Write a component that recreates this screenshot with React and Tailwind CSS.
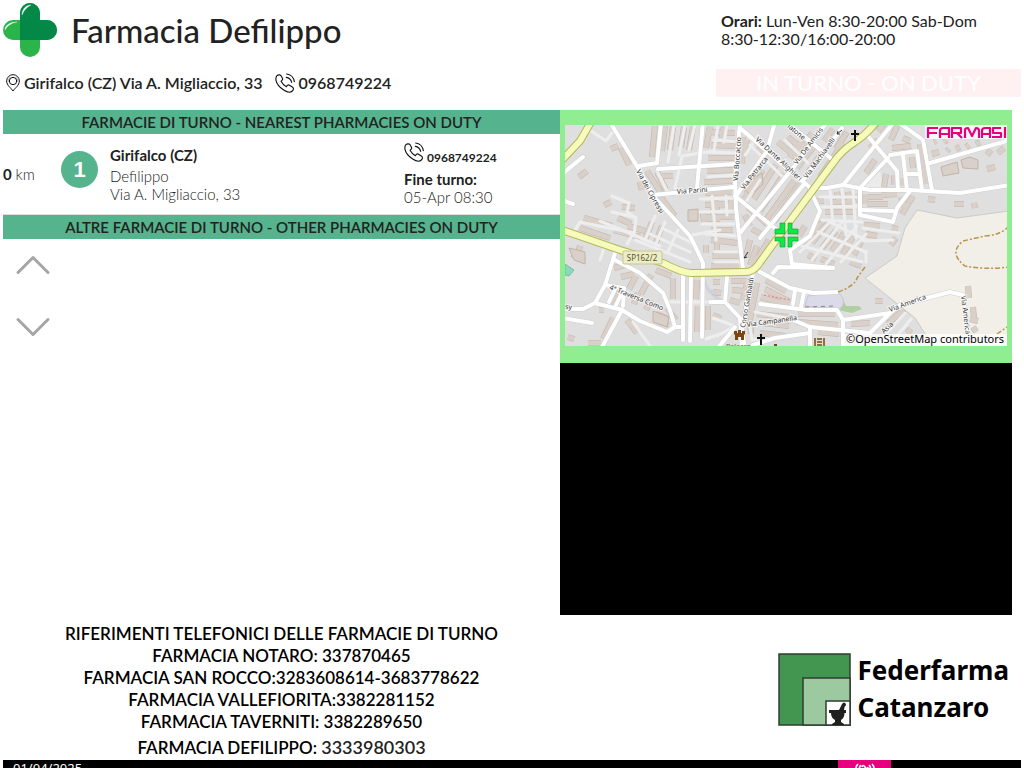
import React from "react";
import { ChevronUp, ChevronDown } from "lucide-react";

const minorRoads = [
  "M590 130L606 141L612 133", "M675 188L682 156L714 151", "M657 171L668 193", "M612 196L629 203L627 212L636 218L634 236",
  "M575 230L580 222L634 233", "M612 212L634 217", "M600 221L660 246", "M645 240L655 216", "M655 246L665 222", "M668 252L678 230",
  "M635 240L690 262", "M650 234L690 252", "M664 229L692 243", "M627 244L634 232", "M600 260L604 248", "M633 322L650 346",
  "M668 302L720 302", "M692 235L720 230", "M714 140L738 142", "M710 152L737 153", "M710 165L736 163", "M708 177L735 175",
  "M697 189L735 188", "M700 199L732 198", "M674 125L668 162", "M685 125L679 155", "M695 125L689 150", "M718 125L714 150",
  "M727 125L724 142", "M712 196L716 240", "M726 196L727 215", "M700 212L735 211", "M702 224L737 224", "M706 234L738 236",
  "M715 252L738 252", "M715 262L740 262", "M750 145L784 178", "M758 136L745 155", "M745 203L760 180", "M785 140L808 163",
  "M820 197L860 197", "M822 207L860 206", "M822 220L862 222", "M830 190L833 224", "M842 188L846 235", "M853 189L856 238",
  "M800 252L830 222L866 240", "M812 260L842 222", "M826 264L857 226", "M841 262L866 234", "M802 246L862 262", "M818 232L866 252",
  "M863 228L899 233", "M863 241L893 240", "M866 251L866 262", "M884 336L905 313", "M892 342L911 319", "M755 312L791 319",
  "M750 327L752 340L790 336", "M713 318L735 326L717 336", "M706 339L720 334",
];
const roads = [
  "M610 122L638 168L655 198L690 236L697 250L703 263L702 337", "M562 174L583 157", "M562 200L573 204",
  "M639 166L657 163L661 122", "M658 169L735 164", "M653 195L733 187", "M703 122L697 188",
  "M740 122L735 181L736 208L743 269", "M740 128L790 171L813 190", "M775 122L767 151L736 196",
  "M827 122L793 168L740 233", "M805 183L760 238", "M786 122L833 160", "M842 128L803 180", "M735 196L777 230",
  "M810 188L827 188L843 185L870 190L910 190L960 193L1010 185", "M810 190L820 211L810 236L790 250L792 264L833 268",
  "M773 273L778 267L833 268", "M894 122L843 185", "M867 135L897 171L898 190", "M888 158L860 188L860 215L893 222L897 208L910 191",
  "M862 210L893 211", "M898 122L923 140L932 190", "M930 163L1010 140", "M890 155L917 151L922 190", "M903 155L907 190",
  "M906 174L919 174", "M760 272L790 288L813 293L837 292", "M795 290L793 304", "M804 292L801 307",
  "M727 277L725 302L710 302", "M725 302L740 318L742 349", "M753 273L742 330L745 349",
  "M760 304L807 310L837 310L843 320L843 349", "M843 320L890 313L900 305L950 292L963 295L968 333", "M870 333L890 313",
  "M793 320L810 327L870 333", "M753 345L775 338L810 333", "M810 327L810 349", "M735 327L717 349",
  "M615 253L605 285L595 303", "M562 309L583 309L595 303L622 310L640 321L667 332L675 327L670 310L663 293L640 273L615 260",
  "M622 310L601 349", "M562 318L592 323", "M683 276L683 340", "M691 276L690 341", "M675 327L683 327",
  "M605 285L616 287L609 302", "M616 287L624 288L616 305", "M624 290L623 306",
];
const buildings = [
  "M655 126L652 157", "M665 126L662 151", "M673 127L670 150", "M684 127L681 147", "M693 127L689 150", "M710 127L706 148",
  "M724 127L722 138", "M621 148L629 165", "M579 177L587 171", "M611 149L618 146", "M640 182L642 190", "M647 171L661 193",
  "M657 172L666 190", "M660 196L675 216", "M662 176L673 176", "M604 205L611 202", "M584 218L612 226", "M622 207L635 208",
  "M618 218L631 224", "M580 228L610 238", "M572 254L585 261", "M580 246L577 258", "M703 211L704 222", "M713 205L713 218",
  "M703 219L720 219", "M692 210L692 222", "M706 245L706 253", "M717 238L717 250",
  "M743 137L742 164", "M747 140L742 158", "M756 149L767 155", "M763 170L746 194", "M757 184L744 199", "M776 165L754 199",
  "M784 174L760 211", "M794 181L766 220", "M800 184L774 222", "M778 142L797 158", "M788 137L803 150", "M800 142L790 158",
  "M812 133L798 154", "M815 145L797 168", "M824 150L807 174", "M843 143L820 177", "M833 129L824 141", "M847 132L836 149",
  "M748 207L767 224", "M745 215L750 226", "M752 229L761 234", "M750 240L746 257", "M757 246L750 265", "M769 240L754 264",
  "M706 132L735 133", "M711 145L736 146", "M708 158L735 158", "M707 171L733 170", "M704 182L732 181", "M705 193L732 192",
  "M705 205L733 204", "M704 217L734 217", "M715 200L717 211", "M731 200L730 212", "M711 230L733 230", "M711 240L737 243",
  "M712 256L739 256", "M711 266L739 266", "M614 230L640 237", "M628 226L645 231", "M652 222L645 240", "M662 226L655 245",
  "M614 268L625 265", "M621 277L634 274", "M629 289L636 276", "M641 294L651 275", "M618 290L611 304", "M634 304L638 293",
  "M646 310L651 300", "M656 314L669 319", "M657 321L669 325", "M613 318L603 339", "M627 320L637 333", "M599 310L604 310",
  "M588 343L601 343", "M568 337L574 339", "M656 270L671 276", "M673 278L673 299", "M667 308L676 320", "M697 280L696 299",
  "M698 306L697 332", "M708 306L708 330", "M713 282L720 282", "M713 292L721 293", "M713 315L721 319",
  "M731 281L748 281", "M732 290L745 291", "M730 300L740 303", "M748 300L743 325",
  "M748 280L743 300", "M757 283L750 319", "M766 280L786 291", "M765 289L790 302", "M761 297L788 305", "M750 319L751 334",
  "M757 314L789 317", "M762 323L789 326", "M760 333L785 336", "M798 314L835 314", "M797 322L838 325", "M818 332L839 334",
  "M851 324L870 323", "M850 335L861 335", "M817 201L824 201", "M825 212L854 212", "M829 202L854 202", "M837 192L839 202",
  "M848 192L850 203", "M857 194L859 202", "M802 246L822 222", "M812 243L828 223", "M822 248L836 231", "M832 251L844 233",
  "M843 254L853 236", "M854 255L863 238", "M808 255L816 259", "M821 259L834 264", "M850 262L861 266", "M799 236L805 226",
  "M865 194L865 204", "M867 197L883 197", "M882 195L897 194", "M867 204L888 204", "M901 197L906 210", "M913 196L902 214",
  "M864 225L880 226", "M866 234L877 236", "M892 228L898 229", "M896 238L891 245", "M878 131L884 124", "M898 124L891 140",
  "M903 138L910 141", "M892 148L911 146", "M920 144L926 184", "M912 157L913 168", "M894 175L894 185", "M886 174L884 187",
  "M902 178L902 186", "M870 148L878 140", "M875 160L866 173", "M932 154L939 152", "M947 151L949 149", "M956 149L960 147",
  "M966 147L969 145", "M976 144L980 142", "M934 142L936 141", "M944 142L947 140", "M987 155L991 150", "M998 153L1004 148",
  "M987 169L995 167", "M954 204L964 204", "M974 203L975 208", "M928 199L935 200", "M875 301L883 301", "M904 309L888 324",
  "M911 329L907 333", "M968 286L969 298", "M973 307L974 318", "M970 319L978 321", "M973 327L976 332",
];
const bigBuildings = [
  "M941 167L957 162L959 173L943 176Z", "M961 160L970 157L978 160L978 169L963 168Z", "M688 210L698 209L698 221L688 221Z",
  "M653 311L669 317L667 327L653 322Z", "M569 248L585 252L585 264L574 260Z", "M742 186L762 173L763 184L750 195Z",
];

function StreetLabel({ x, y, angle, children }) {
  return (
    <text x={x} y={y} transform={`rotate(${angle} ${x} ${y})`} fontSize="7" fill="#333" stroke="#fff" strokeWidth="2" strokeOpacity=".7" paintOrder="stroke" fontFamily="Noto Sans, sans-serif">
      {children}
    </text>
  );
}

function StreetMap() {
  return (
    <svg viewBox="565 125 442 221" className="block w-full" role="img" aria-label="Mappa di Girifalco">
      <rect x="565" y="125" width="442" height="221" fill="#dfdfdf" />
      <path d="M917 210L957 218L1009 211V348H934L915 318L865 278L897 256L905 228Z" fill="#f2efe9" stroke="#cfcac4" />
      <path d="M862 188L880 171L884 188Z" fill="#ebebeb" />
      <path d="M565 264L574 270L569 276L565 275Z" fill="#8bd8ba" stroke="#74bfa2" />
      <path d="M843 299L846 306L859 306L862 309L852 313L838 310Z" fill="#aed0a2" />
      <path d="M808 296L838 292Q848 301 840 309L805 306Z" fill="#dadae8" stroke="#c6c6d4" />
      <path d="M704 278Q706 292 720 300M710 290L722 302" fill="none" stroke="#d0d0e0" strokeWidth="3" />
      <g fill="none">
        {buildings.map((d) => <path key={d} d={d} stroke="#c3b3a9" strokeWidth="6" />)}
        {buildings.map((d) => <path key={d} d={d} stroke="#d9d0c9" strokeWidth="5" />)}
      </g>
      <g fill="#d9d0c9" stroke="#c3b3a9">{bigBuildings.map((d) => <path key={d} d={d} />)}</g>
      <g fill="none" stroke="#eeeeee" strokeWidth="3" strokeLinejoin="round" strokeLinecap="round">
        {minorRoads.map((d) => <path key={d} d={d} />)}
      </g>
      <g fill="none" stroke="#d0d0d0" strokeWidth="5" strokeLinejoin="round" strokeLinecap="round">
        {roads.map((d) => <path key={d} d={d} />)}
      </g>
      <g fill="none" stroke="#fff" strokeWidth="4" strokeLinejoin="round" strokeLinecap="round">
        {roads.map((d) => <path key={d} d={d} />)}
      </g>
      {[["#b4b65a", 8], ["#f6fabb", 6]].map(([color, width]) => (
        <path key={color} d="M591 122L580 141L562 160M562 230L620 250L663 263Q682 273 692 273L745 272Q753 272 758 265L787 225L833 163Q842 150 855 142Q867 134 876 122" fill="none" stroke={color} strokeWidth={width} strokeLinejoin="round" />
      ))}
      <path d="M1009 226Q1001 235 985 236L963 241Q948 253 965 266Q985 270 1009 267M838 292Q855 286 857 278L865 267M997 334L1007 327" fill="none" stroke="#b9954b" strokeWidth="1.5" strokeDasharray="5 2 2 2" />
      <path d="M764 295L790 300" stroke="#f27777" strokeDasharray="2 2" fill="none" />
      <path d="M805 307L836 306" stroke="#888" strokeDasharray="4 4" fill="none" />
      <StreetLabel x={636} y={171} angle={61}>Via dei Cipressi</StreetLabel>
      <StreetLabel x={677} y={194} angle={-4}>Via Parini</StreetLabel>
      <StreetLabel x={738} y={181} angle={-86}>Via Boccaccio</StreetLabel>
      <StreetLabel x={744} y={190} angle={-52}>Via Petrarca</StreetLabel>
      <StreetLabel x={755} y={140} angle={43}>Via Dante Alighieri</StreetLabel>
      <StreetLabel x={797} y={165} angle={-53}>Via De Amicis</StreetLabel>
      <StreetLabel x={807} y={179} angle={-54}>Via Machiavelli</StreetLabel>
      <StreetLabel x={787} y={127} angle={40}>latone</StreetLabel>
      <StreetLabel x={609} y={289} angle={22}>4ª Traversa Como</StreetLabel>
      <StreetLabel x={565} y={309} angle={5}>sy</StreetLabel>
      <StreetLabel x={745} y={328} angle={-80}>Corso Garibaldi</StreetLabel>
      <StreetLabel x={747} y={327} angle={-8}>Via Campanella</StreetLabel>
      <StreetLabel x={890} y={312} angle={-20}>Via America</StreetLabel>
      <StreetLabel x={961} y={296} angle={83}>Via America</StreetLabel>
      <StreetLabel x={884} y={334} angle={-43}>Asia</StreetLabel>
      <text x="726" y="349" fontSize="7" fill="#8b5a16" fontFamily="Noto Sans, sans-serif">Palazzo</text>
      <rect x="623" y="251" width="39" height="13" rx="1" fill="#ecedc8" stroke="#c5c78f" />
      <text x="642" y="261" textAnchor="middle" fontSize="8" fill="#555522" fontFamily="Noto Sans, sans-serif">SP162/2</text>
      <path d="M855 130V141M851 134H859M761 334V345M757 338H765" stroke="#111" strokeWidth="2" fill="none" />
      <path d="M734 331H737V333H738V330H741V333H742V331H745V334L744 335V340H741V337H738V340H735V335L734 334ZM774 344H777V346H774Z" fill="#7a4711" />
      <path d="M815 338V346M824 338V346M817 339H822M817 342H822M817 345H822" fill="none" stroke="#7a4711" strokeWidth="1.5" />
      <path d="M837 134L842 130M837 134L840 134M837 134L838 131M744 258L748 252M744 258L747 257" stroke="#333" fill="none" />
      <g fill="#12e845" stroke="#0a9a31" strokeWidth=".6">
        <path d="M780 223H785V234H775V229H780ZM788 223H792V229H798V234H788ZM775 237H785V247H780V241H775ZM788 237H798V241H792V247H788Z" />
      </g>
      <rect x="925" y="125" width="84" height="14" fill="#fff" fillOpacity=".75" />
      <g fill="none" stroke="#e6007e" strokeWidth="2.2" strokeLinejoin="round">
        <path d="M928 138V128H938M928 133H937M940 138V131Q940 128 943 128H949V138M940 134H949M952 138V128H961V133H953M957 133L962 138M965 138V130Q965 128 968 128L972 136L976 128Q979 128 979 131V138M982 138V131Q982 128 985 128H990V138M982 134H990M1001 128H993V133H1001V137H992M1005 127V138" />
      </g>
      <rect x="845" y="334" width="164" height="14" fill="#fff" fillOpacity=".75" />
      <text x="846" y="343" fontSize="11" fill="#000" fontFamily="Noto Sans, sans-serif">©OpenStreetMap contributors</text>
    </svg>
  );
}

function PharmacyCross() {
  return (
    <svg viewBox="0 0 54 54" className="size-[54px] shrink-0" aria-hidden="true">
      <rect x="0" y="17" width="54" height="20" rx="10" fill="#2bb44a" />
      <rect x="17" y="0" width="20" height="54" rx="10" fill="#2bb44a" />
      <path d="M17 37V10A10 10 0 0 1 37 10V17H44A10 10 0 0 1 44 37Z" fill="#048848" />
      <path d="M19 12C19 6 23 2 28 2C24 4 21 7 19 12ZM2 27C2 22 7 19 14 19C8 20 4 23 2 27Z" fill="#fff" stroke="#fff" strokeWidth=".5" strokeOpacity=".6" />
    </svg>
  );
}

function PhoneIcon() {
  return (
    <svg viewBox="0 0 60 60" className="size-5 shrink-0" fill="none" stroke="#111" strokeWidth="3.4" strokeLinecap="round" strokeLinejoin="round" aria-hidden="true">
      <path d="M6 8C10 4 17 5 19 10L23 17C24 20 21 22 18 25C22 32 28 38 34 41C36 38 39 35 42 36L52 42C57 45 56 51 52 54C46 60 35 57 26 51C14 43 5 32 3 22C2 16 3 11 6 8Z" />
      <path d="M35 3C47 4 56 14 58 26M34 13C42 14 48 20 50 28" />
    </svg>
  );
}

function PinIcon() {
  return (
    <svg viewBox="0 0 42 54" className="h-[18px] w-[14px] shrink-0" fill="none" stroke="#111" strokeWidth="3" aria-hidden="true">
      <path d="M21 51C15 42 2 34 2 21A19 19 0 0 1 40 21C40 34 27 42 21 51Z" />
      <circle cx="21" cy="21" r="11" />
      <path d="M8 24A14 14 0 0 1 12 10M34 24A14 14 0 0 0 30 10" strokeWidth="1" />
    </svg>
  );
}

function FederfarmaMark() {
  return (
    <svg viewBox="0 0 73 73" className="size-[73px] shrink-0" aria-hidden="true">
      <g stroke="#303c32" strokeWidth="1.5">
        <rect x="1" y="1" width="71" height="71" fill="#43964f" />
        <rect x="25" y="25" width="47" height="47" fill="#9dc9a0" />
        <rect x="48" y="48" width="24" height="24" fill="#fff" />
      </g>
      <path d="M51 57H68V60H66.500Q66.500 65 63 67V69L66 71V72H54V71L57 69V67Q53 65 53 60H51ZM61 57L64 51Q66 48 68 51Q68 53 66.500 54L66 57Z" fill="#202020" />
    </svg>
  );
}

function SectionTitle({ children }) {
  return <h2 className="bg-[#55b38d] text-center text-[15px] leading-6 font-semibold text-[#222]">{children}</h2>;
}

const contacts = [
  "RIFERIMENTI TELEFONICI DELLE FARMACIE DI TURNO",
  "FARMACIA NOTARO: 337870465",
  "FARMACIA SAN ROCCO:3283608614-3683778622",
  "FARMACIA VALLEFIORITA:3382281152",
  "FARMACIA TAVERNITI: 3382289650",
];

export default function App() {
  return (
    <div className="flex h-screen flex-col overflow-hidden bg-white px-[3px] font-[Lato,sans-serif] text-[#222]">
      <header className="flex shrink-0 justify-between pt-[3px] pb-3">
        <div>
          <div className="flex items-center gap-[14px]">
            <PharmacyCross />
            <h1 className="text-[33px] leading-[54px] font-medium">Farmacia Defilippo</h1>
          </div>
          <div className="mt-3 flex items-center gap-3 pl-[3px] text-base leading-7 font-semibold">
            <span className="flex items-center gap-1"><PinIcon />Girifalco (CZ) Via A. Migliaccio, 33</span>
            <span className="flex items-center gap-1"><PhoneIcon />0968749224</span>
          </div>
        </div>
        <div className="flex w-[305px] flex-col justify-between">
          <p className="px-[5px] pt-[9px] text-base leading-[18px]"><b>Orari:</b> Lun-Ven 8:30-20:00 Sab-Dom 8:30-12:30/16:00-20:00</p>
          <p className="bg-[#fff1f1] text-center text-[22px] leading-7 font-medium text-white">IN TURNO - ON DUTY</p>
        </div>
      </header>

      <main className="grid shrink-0 grid-cols-[557fr_461fr] pt-px">
        <section className="flex flex-col">
          <SectionTitle>FARMACIE DI TURNO - NEAREST PHARMACIES ON DUTY</SectionTitle>
          <div className="flex h-[81px] border-b border-[#ddd] text-[15px] leading-[18px]">
            <p className="w-[58px] self-center"><b>0</b> <span className="font-light">km</span></p>
            <span className="mt-[17px] mr-3 flex size-[37px] items-center justify-center rounded-full bg-[#55b38d] font-['Liberation_Sans',sans-serif] text-[22px] font-bold text-white">1</span>
            <div className="flex-1 pt-3">
              <h3 className="mb-[3px] font-bold">Girifalco (CZ)</h3>
              <p className="font-light">Defilippo</p>
              <p className="font-light">Via A. Migliaccio, 33</p>
            </div>
            <div className="w-[156px] pt-2">
              <p className="mb-1 flex gap-[3px]"><PhoneIcon /><span className="mt-2 text-xs leading-4 font-bold">0968749224</span></p>
              <p className="font-bold">Fine turno:</p>
              <p className="font-light">05-Apr 08:30</p>
            </div>
          </div>
          <SectionTitle>ALTRE FARMACIE DI TURNO - OTHER PHARMACIES ON DUTY</SectionTitle>
          <div className="flex flex-col items-start pt-px pl-[5px] text-[#a5a5a5]">
            <button type="button" aria-label="Scorri su" className="mb-3"><ChevronUp strokeWidth={1.2} viewBox="2 2 20 20" className="size-[50px]" /></button>
            <button type="button" aria-label="Scorri giù"><ChevronDown strokeWidth={1.2} viewBox="2 2 20 20" className="size-[50px]" /></button>
          </div>
          <div className="mt-auto text-center text-[17px] leading-[22px] font-semibold text-black">
            {contacts.map((line) => <p key={line}>{line}</p>)}
            <p className="pt-[2px] pb-px">FARMACIA DEFILIPPO: <span className="text-lg leading-6 text-[#222]">3333980303</span></p>
          </div>
        </section>

        <section className="pr-[9px]">
          <div className="bg-[#90ee90] px-[5px] pt-[15px] pb-[17px]"><StreetMap /></div>
          <div className="aspect-[452/252] bg-black" />
          <div className="flex items-center justify-end gap-[6px] pr-[3px] pt-[37px] pb-[34px]">
            <FederfarmaMark />
            <p className="font-['Noto_Sans',sans-serif] text-[26px] leading-[37px] font-bold text-black">Federfarma<br />Catanzaro</p>
          </div>
        </section>
      </main>

      <footer className="flex h-8 shrink-0 bg-black pl-[10px] font-['Noto_Sans',sans-serif] text-[13px] leading-4 text-white">
        <time dateTime="2025-04-01" className="flex-1">01/04/2025</time>
        <div className="mr-[130px] w-[53px] bg-[#e6007e] pt-[3px]">
          <svg viewBox="0 0 24 24" className="mx-auto size-6" fill="none" stroke="#fff" strokeWidth="1.7" aria-hidden="true">
            <path d="M5 1Q1 5 5 9M8 2Q5 5 8 8M19 1Q23 5 19 9M16 2Q19 5 16 8M9 4Q10 1 12 4T15 4M12 5V22" />
          </svg>
        </div>
      </footer>
    </div>
  );
}
